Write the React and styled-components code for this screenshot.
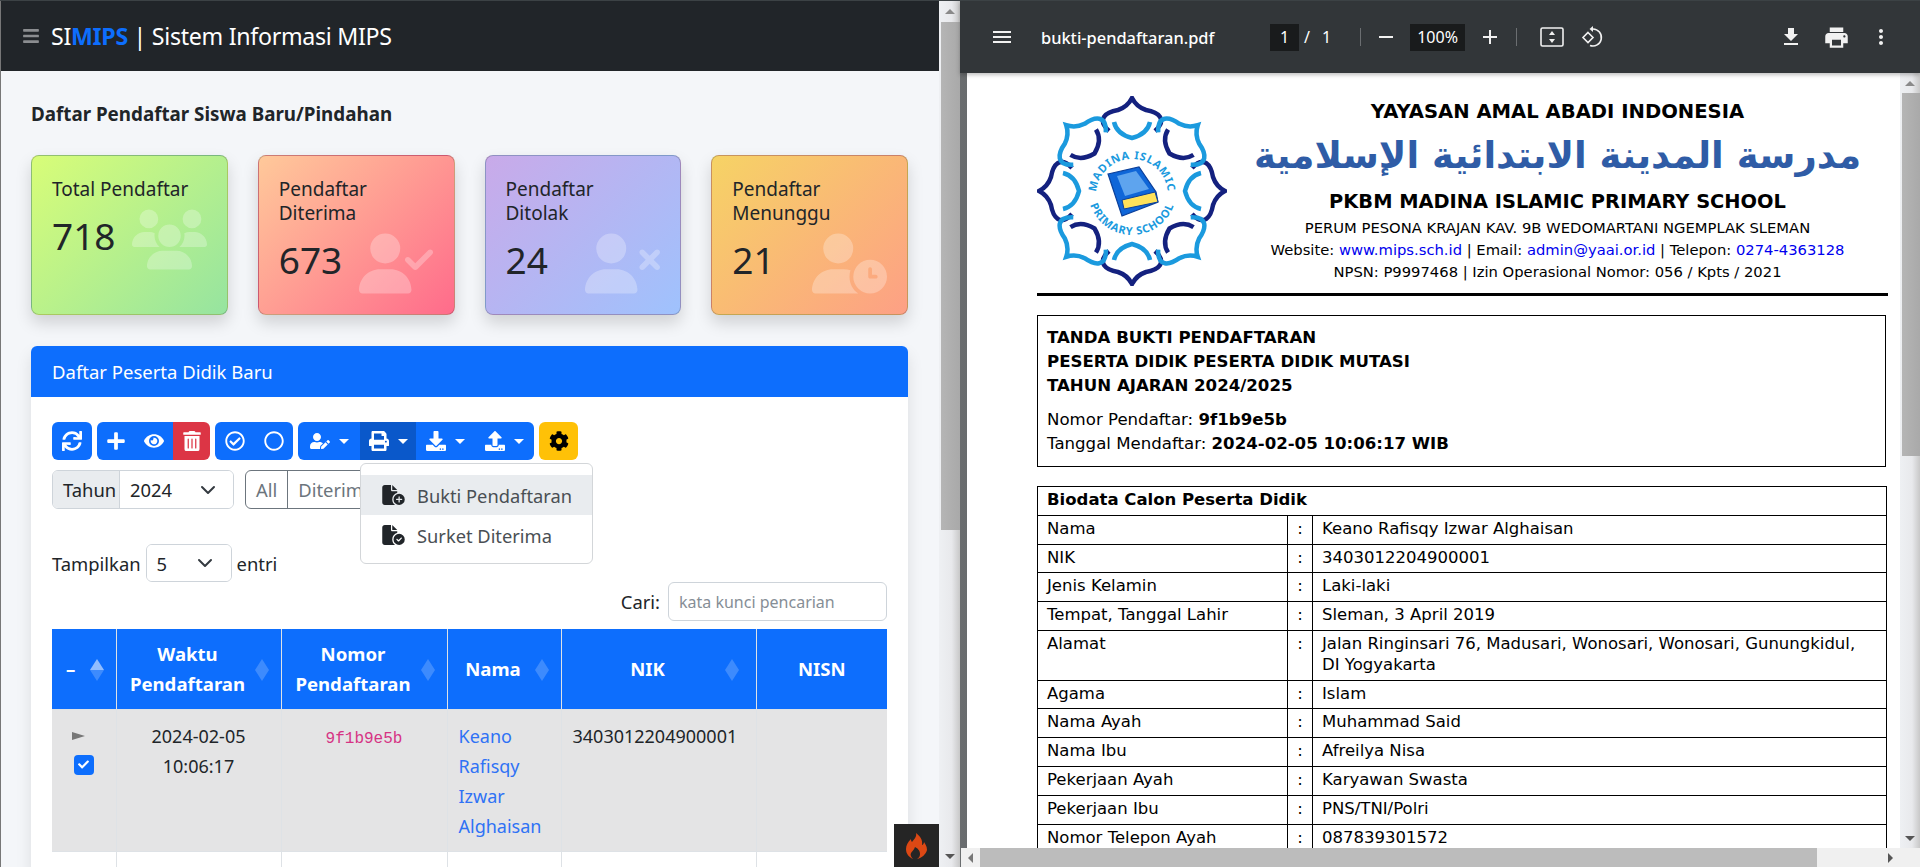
import React from 'react'
import styled, { createGlobalStyle } from 'styled-components'
import { FaSync, FaPlus, FaEye, FaTrashAlt, FaRegCheckCircle, FaRegCircle, FaUserEdit, FaPrint, FaDownload, FaUpload, FaCog, FaBars, FaCheck } from 'react-icons/fa'
import { FaUsers, FaUserCheck, FaUserXmark, FaUserClock, FaFileCirclePlus, FaFileCircleCheck } from 'react-icons/fa6'
import { MdFileDownload, MdPrint, MdMoreVert, MdMenu, MdAdd, MdRemove } from 'react-icons/md'

const GlobalStyle = createGlobalStyle`
    html, body {
        margin: 0;
        padding: 0;
        height: 100%;
        overflow: hidden;
        background: #323639;
    }
    * { box-sizing: border-box; }
`

const SANS = `"Noto Sans", "Open Sans", sans-serif`
const PDF = `"DejaVu Sans", "Liberation Sans", sans-serif`

const Screen = styled.div`
    display: flex;
    width: 1920px;
    height: 867px;
    overflow: hidden;
    border-top: 1px solid #3c4245;
`

/* ---------- left window ---------- */

const LeftPane = styled.div`
    position: relative;
    display: flex;
    width: 960px;
    height: 866px;
    border-left: 1px solid #777;
    font-family: ${SANS};
    color: #212529;
    background: #f4f6f9;
`

const Main = styled.div`
    width: 938px;
    height: 866px;
    overflow: hidden;
`

const TopBar = styled.header`
    display: flex;
    align-items: center;
    gap: 11px;
    height: 70px;
    padding: 0 21px;
    background: #212529;
    color: #fff;
    font-size: 23.2px;
    svg { color: #8b8d90; font-size: 18px; }
`

const Brand = styled.span`
    letter-spacing: -0.3px;
    white-space: nowrap;
    b { color: #0d6efd; font-weight: 700; }
`

const Content = styled.div`
    padding: 31px 31px 0 30px;
`

const PageTitle = styled.h1`
    margin: 0;
    font-size: 18.8px;
    line-height: 24px;
    font-weight: 700;
`

const Stats = styled.div`
    display: flex;
    gap: 30px;
    margin-top: 29px;
`

const StatCard = styled.div`
    width: 197px;
    height: 160px;
    padding: 21px 20px;
    border: 1px solid rgba(0, 0, 0, 0.2);
    border-radius: 8px;
    background: linear-gradient(135deg, ${p => p.$from}, ${p => p.$to});
    box-shadow: 0 8px 16px rgba(0, 0, 0, 0.15);
`

const StatLabel = styled.div`
    padding-right: 10px;
    font-size: 19px;
    line-height: 24px;
`

const StatRow = styled.div`
    display: flex;
    align-items: center;
    justify-content: space-between;
    height: 62px;
    margin-top: 7px;
    svg {
        font-size: 75px;
        color: rgba(255, 255, 255, 0.28);
        flex: none;
    }
`

const StatNumber = styled.span`
    margin-bottom: 6px;
    font-size: 37px;
    line-height: 50px;
`

const Panel = styled.section`
    width: 877px;
    margin-top: 31px;
    background: #fff;
    border-radius: 6px 6px 0 0;
    box-shadow: 0 8px 16px rgba(0, 0, 0, 0.1);
`

const PanelHead = styled.div`
    display: flex;
    align-items: center;
    height: 51px;
    padding: 0 21px;
    border-radius: 6px 6px 0 0;
    background: #0d6efd;
    color: #fff;
    font-size: 18.5px;
`

const PanelBody = styled.div`
    position: relative;
    padding: 25px 21px 0;
`

const Toolbar = styled.div`
    display: flex;
    gap: 5px;
`

const BtnGroup = styled.div`
    display: flex;
    & > button:first-child { border-radius: 6px 0 0 6px; }
    & > button:last-child { border-radius: 0 6px 6px 0; }
    & > button:only-child { border-radius: 6px; }
`

const colors = { primary: '#0d6efd', active: '#0a58ca', danger: '#dc3545', warning: '#ffc107' }

const ToolBtn = styled.button`
    display: flex;
    align-items: center;
    justify-content: center;
    gap: 9px;
    width: ${p => p.$w}px;
    height: 38px;
    padding: 0;
    border: none;
    border-radius: 0;
    background: ${p => colors[p.$kind || 'primary']};
    color: ${p => (p.$kind === 'warning' ? '#000' : '#fff')};
    font-size: 20px;
`

const Caret = styled.i`
    width: 0;
    height: 0;
    border-top: 5px solid currentColor;
    border-left: 5px solid transparent;
    border-right: 5px solid transparent;
`

const FilterRow = styled.div`
    display: flex;
    gap: 11px;
    margin-top: 10px;
`

const InputGroup = styled.div`
    display: flex;
    height: 39px;
    border: 1px solid #ced4da;
    border-radius: 6px;
    font-size: 18.4px;
    overflow: hidden;
    background: #fff;
`

const Addon = styled.span`
    display: flex;
    align-items: center;
    width: 67px;
    padding-left: 10px;
    background: #e9ecef;
    border-right: 1px solid #ced4da;
`

const SelectBox = styled.div`
    display: flex;
    align-items: center;
    justify-content: space-between;
    width: ${p => p.$w}px;
    height: 100%;
    padding: 0 ${p => p.$pr}px 0 10px;
    background: #fff;
    font-size: 18.4px;
`

const Chevron = () => (
    <svg width="16" height="16" viewBox="0 0 16 16" fill="none" stroke="#343a40" strokeWidth="2" strokeLinecap="round" strokeLinejoin="round">
        <path d="M2 5l6 6 6-6" />
    </svg>
)

const ToggleGroup = styled.div`
    display: flex;
    height: 39px;
    border: 1px solid #6c757d;
    border-radius: 6px;
    color: #6c757d;
    font-size: 18.4px;
    span {
        display: flex;
        align-items: center;
        padding: 0 10px;
    }
    span + span { border-left: 1px solid #6c757d; }
`

const Menu = styled.div`
    position: absolute;
    left: 329px;
    top: 66px;
    z-index: 5;
    width: 233px;
    height: 101px;
    padding: 11px 0;
    background: #fff;
    border: 1px solid #d3d6d9;
    border-radius: 6px;
`

const MenuItem = styled.div`
    display: flex;
    align-items: center;
    gap: 12px;
    height: 40px;
    padding-left: 21px;
    font-size: 18.3px;
    color: #4a4f54;
    background: ${p => (p.$active ? '#e9ecef' : 'transparent')};
    svg { color: #212529; font-size: 20px; width: 23px; }
`

const LengthRow = styled.div`
    display: flex;
    align-items: center;
    gap: 5px;
    margin-top: 35px;
    height: 38px;
    font-size: 18.4px;
`

const LengthSelect = styled.div`
    width: 86px;
    height: 38px;
    border: 1px solid #ced4da;
    border-radius: 6px;
    overflow: hidden;
`

const SearchRow = styled.div`
    display: flex;
    align-items: center;
    justify-content: flex-end;
    gap: 8px;
    height: 39px;
    font-size: 18.4px;
`

const SearchInput = styled.div`
    display: flex;
    align-items: center;
    width: 219px;
    height: 39px;
    padding-left: 10px;
    border: 1px solid #ced4da;
    border-radius: 6px;
    color: #868e96;
    font-size: 16px;
`

const Table = styled.table`
    width: 835px;
    margin-top: 8px;
    table-layout: fixed;
    border-collapse: collapse;
    font-size: 18px;
    line-height: 30px;
`

const Th = styled.th`
    position: relative;
    height: 80px;
    padding: 0 ${p => p.$pr ?? 26}px 0 ${p => p.$pl ?? 4}px;
    background: #0d6efd;
    color: #fff;
    font-size: 18.6px;
    font-weight: 700;
    text-align: ${p => p.$align || 'center'};
    border-left: 1px solid #dee2e6;
    &:first-child { border-left: none; }
`

const Sort = styled.i`
    position: absolute;
    right: ${p => p.$right ?? 12}px;
    top: 30px;
    width: 14px;
    height: 22px;
    &::before, &::after {
        content: '';
        position: absolute;
        left: 0;
        border-left: 7px solid transparent;
        border-right: 7px solid transparent;
    }
    &::before {
        top: 0;
        border-bottom: 11px solid rgba(255, 255, 255, ${p => (p.$asc ? 0.55 : 0.2)});
    }
    &::after {
        bottom: 0;
        border-top: 11px solid rgba(255, 255, 255, 0.2);
    }
`

const Td = styled.td`
    height: ${p => p.$h}px;
    padding: 11px 11px 10px;
    vertical-align: top;
    background: ${p => (p.$h ? '#e4e4e5' : '#fff')};
    border: 1px solid #dee2e6;
    text-align: ${p => p.$align || 'left'};
    &:first-child { border-left: none; }
    &:last-child { border-right: none; }
`

const Expand = styled.div`
    display: flex;
    flex-direction: column;
    align-items: center;
    gap: 15px;
    padding-top: 11px;
`

const ExpandArrow = styled.i`
    width: 0;
    height: 0;
    margin-left: -10px;
    border-left: 13px solid #777;
    border-top: 4px solid transparent;
    border-bottom: 4px solid transparent;
`

const CheckBox = styled.span`
    display: flex;
    align-items: center;
    justify-content: center;
    width: 20px;
    height: 20px;
    border-radius: 4px;
    background: #0d6efd;
    color: #fff;
    font-size: 11px;
`

const Code = styled.code`
    font-family: "Liberation Mono", monospace;
    font-size: 16px;
    color: #d63384;
`

const NameLink = styled.a`
    color: #2f72f5;
`

const DebugIcon = styled.div`
    position: absolute;
    right: 21px;
    bottom: 0;
    display: flex;
    align-items: center;
    justify-content: center;
    width: 45px;
    height: 43px;
    background: #252525;
    z-index: 6;
`

/* scrollbars, drawn because the reference shows the classic windows ones */

const VBar = styled.div`
    display: flex;
    flex-direction: column;
    align-items: stretch;
    width: ${p => p.$w || 21}px;
    flex: none;
    background: linear-gradient(90deg, #eef0f3, #e8e9ec 60%, #c8c8c8);
`

const VThumb = styled.div`
    height: ${p => p.$h}px;
    margin-left: 2px;
    background: linear-gradient(90deg, #b5b5b5, #a9a9a9);
`

const VSpace = styled.div`
    flex: 1;
`

const ArrowCell = styled.div`
    display: flex;
    align-items: center;
    justify-content: center;
    flex: none;
    width: ${p => p.$size || 21}px;
    height: ${p => p.$size || 21}px;
`

const Tri = styled.i`
    width: 0;
    height: 0;
    ${p => p.$dir === 'up' && 'border-bottom: 5px solid #8a8a8a; border-left: 5px solid transparent; border-right: 5px solid transparent;'}
    ${p => p.$dir === 'down' && 'border-top: 5px solid #555; border-left: 5px solid transparent; border-right: 5px solid transparent;'}
    ${p => p.$dir === 'left' && 'border-right: 5px solid #777; border-top: 5px solid transparent; border-bottom: 5px solid transparent;'}
    ${p => p.$dir === 'right' && 'border-left: 5px solid #555; border-top: 5px solid transparent; border-bottom: 5px solid transparent;'}
`

/* ---------- pdf viewer ---------- */

const RightPane = styled.div`
    display: flex;
    flex-direction: column;
    width: 960px;
    height: 866px;
    background: linear-gradient(90deg, #6a6d6f, #3a3d40 40%);
`

const ViewerBar = styled.div`
    position: relative;
    z-index: 2;
    display: flex;
    align-items: center;
    height: 72px;
    background: #323639;
    color: #fff;
    font-family: ${SANS};
    box-shadow: 0 2px 4px rgba(0, 0, 0, 0.25);
    flex: none;
`

const ViewerIcon = styled.span`
    display: flex;
    align-items: center;
    justify-content: center;
    flex: none;
    width: ${p => p.$w}px;
    margin-left: ${p => p.$ml || 0}px;
    color: #f1f1f1;
    font-size: ${p => p.$size || 24}px;
`

const FileName = styled.span`
    width: 229px;
    margin-left: 27px;
    font-size: 16.4px;
    font-weight: 500;
    white-space: nowrap;
`

const PageBox = styled.span`
    display: flex;
    align-items: center;
    justify-content: center;
    flex: none;
    width: ${p => p.$w}px;
    height: 27px;
    margin-left: ${p => p.$ml || 0}px;
    background: #191b1c;
    font-size: 16px;
`

const PageText = styled.span`
    flex: none;
    margin-left: ${p => p.$ml}px;
    font-size: 16px;
`

const VDivider = styled.i`
    flex: none;
    width: 1px;
    height: 18px;
    margin-left: ${p => p.$ml}px;
    background: #6b6e71;
`

const ViewerBody = styled.div`
    display: flex;
    flex: 1;
    min-height: 0;
    padding-left: 7px;
`

const Page = styled.div`
    flex: 1;
    min-width: 0;
    padding: 0 12px 0 70px;
    background: #fff;
    color: #000;
    font-family: ${PDF};
    overflow: hidden;
`

const Letterhead = styled.div`
    display: flex;
    height: 223px;
    border-bottom: 3px solid #000;
`

const LogoWrap = styled.div`
    width: 190px;
    padding-top: 23px;
    flex: none;
`

const HeadText = styled.div`
    flex: 1;
    min-width: 0;
    padding: 24px 0 0;
    text-align: center;
    line-height: 22px;
`

const OrgName = styled.div`
    font-size: ${p => p.$size}px;
    line-height: 30px;
    font-weight: 700;
    white-space: nowrap;
`

const ArabicName = styled.div`
    height: 50px;
    margin: 4px 0 6px;
    font-size: 37px;
    line-height: 50px;
    font-weight: 700;
    color: #2f5ca6;
    white-space: nowrap;
`

const HeadLine = styled.div`
    font-size: 14.75px;
    white-space: nowrap;
`

const Blue = styled.span`
    color: #0000ee;
`

const ReceiptBox = styled.div`
    width: 849px;
    height: 152px;
    margin-top: 19px;
    padding: 10px 9px;
    border: 1px solid #000;
    font-size: 16.6px;
    line-height: 24px;
    p { margin: 0; }
`

const ReceiptTitle = styled.div`
    font-weight: 700;
    margin-bottom: 10px;
`

const BioTable = styled.table`
    width: 849px;
    margin-top: 19px;
    table-layout: fixed;
    border-collapse: collapse;
    font-size: 16.5px;
    line-height: 20.8px;
    td, th {
        padding: 3px 9px 4px;
        border: 1.5px solid #000;
        text-align: left;
        vertical-align: top;
    }
    td:nth-child(2) { text-align: center; padding: 3px 0 4px; }
    td:nth-child(3) { padding-right: 20px; }
`

const HBar = styled.div`
    display: flex;
    height: 19px;
    flex: none;
    margin-left: 1px;
    background: #f0f0f0;
`

const HThumb = styled.div`
    width: 837px;
    background: #bcbcbc;
`

/* ---------- drawings ---------- */

const LOBE = 'M-23 -60C-36 -72 -26 -79 -14 -81C-8 -83 -3 -87 0 -93C3 -87 8 -83 14 -81C26 -79 36 -72 23 -60'
const INNER = 'M-18 -69C-16 -60 -8 -55 0 -53C8 -55 16 -60 18 -69'

const Logo = () => (
    <svg width="190" height="190" viewBox="-95 -95 190 190" fill="none" aria-label="logo">
        {[0, 90, 180, 270].map(a => (
            <g key={a} transform={`rotate(${a})`} strokeWidth="4.5">
                <path d={LOBE} stroke="#14217f" />
                <path d={INNER} stroke="#1b9ade" />
            </g>
        ))}
        {[45, 135, 225, 315].map(a => (
            <g key={a} transform={`rotate(${a})`} strokeWidth="4.5">
                <path d={LOBE} stroke="#1b9ade" />
                <path d={INNER} stroke="#14217f" />
            </g>
        ))}
        <defs>
            <path id="arcTop" d="M-36 4A36 36 0 1 1 36 4" />
            <path id="arcBottom" d="M-44 0A44 44 0 0 0 44 0" />
        </defs>
        <text fontFamily={SANS} fontSize="11" fontWeight="700" fill="#1b9ade" letterSpacing="0.8">
            <textPath href="#arcTop" startOffset="50%" textAnchor="middle">MADINA ISLAMIC</textPath>
        </text>
        <text fontFamily={SANS} fontSize="11" fontWeight="700" fill="#1b9ade" letterSpacing="0.8">
            <textPath href="#arcBottom" startOffset="50%" textAnchor="middle">PRIMARY SCHOOL</textPath>
        </text>
        <path d="M-24 -17L7 -24L24 1L26 11L-10 25Z" fill="#0f66d8" stroke="#0b3f9a" strokeWidth="1.2" />
        <path d="M-10 9L23 1L26 11L-8 18Z" fill="#ffe25a" stroke="#0b3f9a" strokeWidth="1" />
        <path d="M-15 -15L4 -20L17 -2L-7 5Z" fill="#5ea4ee" />
    </svg>
)

const Flame = () => (
    <svg width="22" height="26" viewBox="0 0 22 26" fill="#dd4814">
        <path d="M10 0c1 4 -2 6 -4 9c-1 -1 -1 -2 -1 -3C2 9 0 12 0 16c0 5 3 8 7 10c-2 -2 -3 -4 -2 -6c1 -2 3 -3 4 -6c2 1 5 3 5 7c0 2 -1 4 -3 5c5 -1 9 -5 10 -9c0 -4 -2 -6 -3 -8c0 1 -1 3 -2 3c1 -5 -2 -9 -6 -12z" />
    </svg>
)

const FitIcon = () => (
    <svg width="24" height="20" viewBox="0 0 24 20" fill="none" stroke="#f1f1f1" strokeWidth="1.6">
        <rect x="1" y="1" width="22" height="18" rx="1.5" />
        <path d="M12 4l3 4H9z M12 16l3 -4H9z" fill="#f1f1f1" stroke="none" />
    </svg>
)

const RotateIcon = () => (
    <svg width="24" height="24" viewBox="0 0 24 24" fill="none" stroke="#f1f1f1" strokeWidth="1.6">
        <path d="M11 4h2a8.5 8.5 0 1 1 -3 16.5" />
        <path d="M13 1L9.5 4L13 7z" fill="#f1f1f1" stroke="none" />
        <path d="M8 7.5L13 12.5L8 17.5L3 12.5Z" />
    </svg>
)

const stats = [
    { label: 'Total Pendaftar', value: 718, icon: <FaUsers />, from: '#d8fd78', to: '#96e4a0' },
    { label: 'Pendaftar Diterima', value: 673, icon: <FaUserCheck />, from: '#ffc99a', to: '#ff6b8b' },
    { label: 'Pendaftar Ditolak', value: 24, icon: <FaUserXmark />, from: '#c9aae9', to: '#9fc2fd' },
    { label: 'Pendaftar Menunggu', value: 21, icon: <FaUserClock />, from: '#f6d365', to: '#fda085' },
]

const biodata = [
    ['Nama', 'Keano Rafisqy Izwar Alghaisan'],
    ['NIK', '3403012204900001'],
    ['Jenis Kelamin', 'Laki-laki'],
    ['Tempat, Tanggal Lahir', 'Sleman, 3 April 2019'],
    ['Alamat', 'Jalan Ringinsari 76, Madusari, Wonosari, Wonosari, Gunungkidul, DI Yogyakarta'],
    ['Agama', 'Islam'],
    ['Nama Ayah', 'Muhammad Said'],
    ['Nama Ibu', 'Afreilya Nisa'],
    ['Pekerjaan Ayah', 'Karyawan Swasta'],
    ['Pekerjaan Ibu', 'PNS/TNI/Polri'],
    ['Nomor Telepon Ayah', '087839301572'],
]

export default function App() {
    return (
        <Screen>
            <GlobalStyle />
            <LeftPane>
                <Main>
                    <TopBar>
                        <FaBars />
                        <Brand>SI<b>MIPS</b> | Sistem Informasi MIPS</Brand>
                    </TopBar>
                    <Content>
                        <PageTitle>Daftar Pendaftar Siswa Baru/Pindahan</PageTitle>
                        <Stats>
                            {stats.map(s => (
                                <StatCard key={s.label} $from={s.from} $to={s.to}>
                                    <StatLabel>{s.label}</StatLabel>
                                    <StatRow><StatNumber>{s.value}</StatNumber>{s.icon}</StatRow>
                                </StatCard>
                            ))}
                        </Stats>
                        <Panel>
                            <PanelHead>Daftar Peserta Didik Baru</PanelHead>
                            <PanelBody>
                                <Toolbar>
                                    <BtnGroup><ToolBtn $w={40}><FaSync /></ToolBtn></BtnGroup>
                                    <BtnGroup>
                                        <ToolBtn $w={38}><FaPlus /></ToolBtn>
                                        <ToolBtn $w={38}><FaEye /></ToolBtn>
                                        <ToolBtn $w={37} $kind="danger"><FaTrashAlt /></ToolBtn>
                                    </BtnGroup>
                                    <BtnGroup>
                                        <ToolBtn $w={39}><FaRegCheckCircle /></ToolBtn>
                                        <ToolBtn $w={39}><FaRegCircle /></ToolBtn>
                                    </BtnGroup>
                                    <BtnGroup>
                                        <ToolBtn $w={62}><FaUserEdit /><Caret /></ToolBtn>
                                        <ToolBtn $w={56} $kind="active"><FaPrint /><Caret /></ToolBtn>
                                        <ToolBtn $w={58}><FaDownload /><Caret /></ToolBtn>
                                        <ToolBtn $w={60}><FaUpload /><Caret /></ToolBtn>
                                    </BtnGroup>
                                    <BtnGroup><ToolBtn $w={39} $kind="warning"><FaCog /></ToolBtn></BtnGroup>
                                </Toolbar>
                                <FilterRow>
                                    <InputGroup>
                                        <Addon>Tahun</Addon>
                                        <SelectBox $w={113} $pr={17}>2024<Chevron /></SelectBox>
                                    </InputGroup>
                                    <ToggleGroup>
                                        <span>All</span>
                                        <span>Diterima</span>
                                    </ToggleGroup>
                                </FilterRow>
                                <Menu>
                                    <MenuItem $active><FaFileCirclePlus />Bukti Pendaftaran</MenuItem>
                                    <MenuItem><FaFileCircleCheck />Surket Diterima</MenuItem>
                                </Menu>
                                <LengthRow>
                                    Tampilkan
                                    <LengthSelect><SelectBox $w={84} $pr={18}>5<Chevron /></SelectBox></LengthSelect>
                                    entri
                                </LengthRow>
                                <SearchRow>
                                    Cari:
                                    <SearchInput>kata kunci pencarian</SearchInput>
                                </SearchRow>
                                <Table>
                                    <colgroup>
                                        <col width="64" /><col width="165" /><col width="166" /><col width="114" /><col width="195" /><col width="131" />
                                    </colgroup>
                                    <thead>
                                        <tr>
                                            <Th $pl={14} $pr={0} $align="left">–<Sort $asc /></Th>
                                            <Th>Waktu Pendaftaran<Sort /></Th>
                                            <Th>Nomor Pendaftaran<Sort /></Th>
                                            <Th>Nama<Sort /></Th>
                                            <Th>NIK<Sort $right={17} /></Th>
                                            <Th $pl={0} $pr={0}>NISN</Th>
                                        </tr>
                                    </thead>
                                    <tbody>
                                        <tr>
                                            <Td $h={141}>
                                                <Expand><ExpandArrow /><CheckBox><FaCheck /></CheckBox></Expand>
                                            </Td>
                                            <Td $h={141} $align="center">2024-02-05 10:06:17</Td>
                                            <Td $h={141} $align="center"><Code>9f1b9e5b</Code></Td>
                                            <Td $h={141}><NameLink>Keano Rafisqy Izwar Alghaisan</NameLink></Td>
                                            <Td $h={141}>3403012204900001</Td>
                                            <Td $h={141} />
                                        </tr>
                                        <tr>
                                            <Td /><Td /><Td /><Td /><Td /><Td />
                                        </tr>
                                    </tbody>
                                </Table>
                            </PanelBody>
                        </Panel>
                    </Content>
                </Main>
                <VBar>
                    <ArrowCell><Tri $dir="up" /></ArrowCell>
                    <VThumb $h={508} />
                    <VSpace />
                    <ArrowCell><Tri $dir="down" /></ArrowCell>
                </VBar>
                <DebugIcon><Flame /></DebugIcon>
            </LeftPane>

            <RightPane>
                <ViewerBar>
                    <ViewerIcon $w={24} $ml={30}><MdMenu size={28} /></ViewerIcon>
                    <FileName>bukti-pendaftaran.pdf</FileName>
                    <PageBox $w={29}>1</PageBox>
                    <PageText $ml={5}>/</PageText>
                    <PageText $ml={12}>1</PageText>
                    <VDivider $ml={29} />
                    <ViewerIcon $w={24} $ml={13}><MdRemove /></ViewerIcon>
                    <PageBox $w={55} $ml={12}>100%</PageBox>
                    <ViewerIcon $w={24} $ml={13}><MdAdd /></ViewerIcon>
                    <VDivider $ml={14} />
                    <ViewerIcon $w={24} $ml={23}><FitIcon /></ViewerIcon>
                    <ViewerIcon $w={24} $ml={16}><RotateIcon /></ViewerIcon>
                    <ViewerIcon $w={24} $ml={175}><MdFileDownload /></ViewerIcon>
                    <ViewerIcon $w={28} $ml={19}><MdPrint size={27} /></ViewerIcon>
                    <ViewerIcon $w={24} $ml={19}><MdMoreVert /></ViewerIcon>
                </ViewerBar>
                <ViewerBody>
                    <Page>
                        <Letterhead>
                            <LogoWrap><Logo /></LogoWrap>
                            <HeadText>
                                <OrgName $size={19.6}>YAYASAN AMAL ABADI INDONESIA</OrgName>
                                <ArabicName lang="ar" dir="rtl">مدرسة المدينة الابتدائية الإسلامية</ArabicName>
                                <OrgName $size={19.4}>PKBM MADINA ISLAMIC PRIMARY SCHOOL</OrgName>
                                <HeadLine>PERUM PESONA KRAJAN KAV. 9B WEDOMARTANI NGEMPLAK SLEMAN</HeadLine>
                                <HeadLine>Website: <Blue>www.mips.sch.id</Blue> | Email: <Blue>admin@yaai.or.id</Blue> | Telepon: <Blue>0274-4363128</Blue></HeadLine>
                                <HeadLine>NPSN: P9997468 | Izin Operasional Nomor: 056 / Kpts / 2021</HeadLine>
                            </HeadText>
                        </Letterhead>
                        <ReceiptBox>
                            <ReceiptTitle>
                                TANDA BUKTI PENDAFTARAN<br />
                                PESERTA DIDIK PESERTA DIDIK MUTASI<br />
                                TAHUN AJARAN 2024/2025
                            </ReceiptTitle>
                            <p>Nomor Pendaftar: <b>9f1b9e5b</b></p>
                            <p>Tanggal Mendaftar: <b>2024-02-05 10:06:17 WIB</b></p>
                        </ReceiptBox>
                        <BioTable>
                            <colgroup><col width="250" /><col width="25" /><col width="574" /></colgroup>
                            <thead><tr><th colSpan={3}>Biodata Calon Peserta Didik</th></tr></thead>
                            <tbody>
                                {biodata.map(([k, v]) => (
                                    <tr key={k}><td>{k}</td><td>:</td><td>{v}</td></tr>
                                ))}
                            </tbody>
                        </BioTable>
                    </Page>
                    <VBar $w={20}>
                        <ArrowCell $size={20}><Tri $dir="up" /></ArrowCell>
                        <VThumb $h={363} />
                        <VSpace />
                        <ArrowCell $size={20}><Tri $dir="down" /></ArrowCell>
                    </VBar>
                </ViewerBody>
                <HBar>
                    <ArrowCell $size={19}><Tri $dir="left" /></ArrowCell>
                    <HThumb />
                    <VSpace />
                    <ArrowCell $size={19}><Tri $dir="right" /></ArrowCell>
                    <ArrowCell $size={20} />
                </HBar>
            </RightPane>
        </Screen>
    )
}
